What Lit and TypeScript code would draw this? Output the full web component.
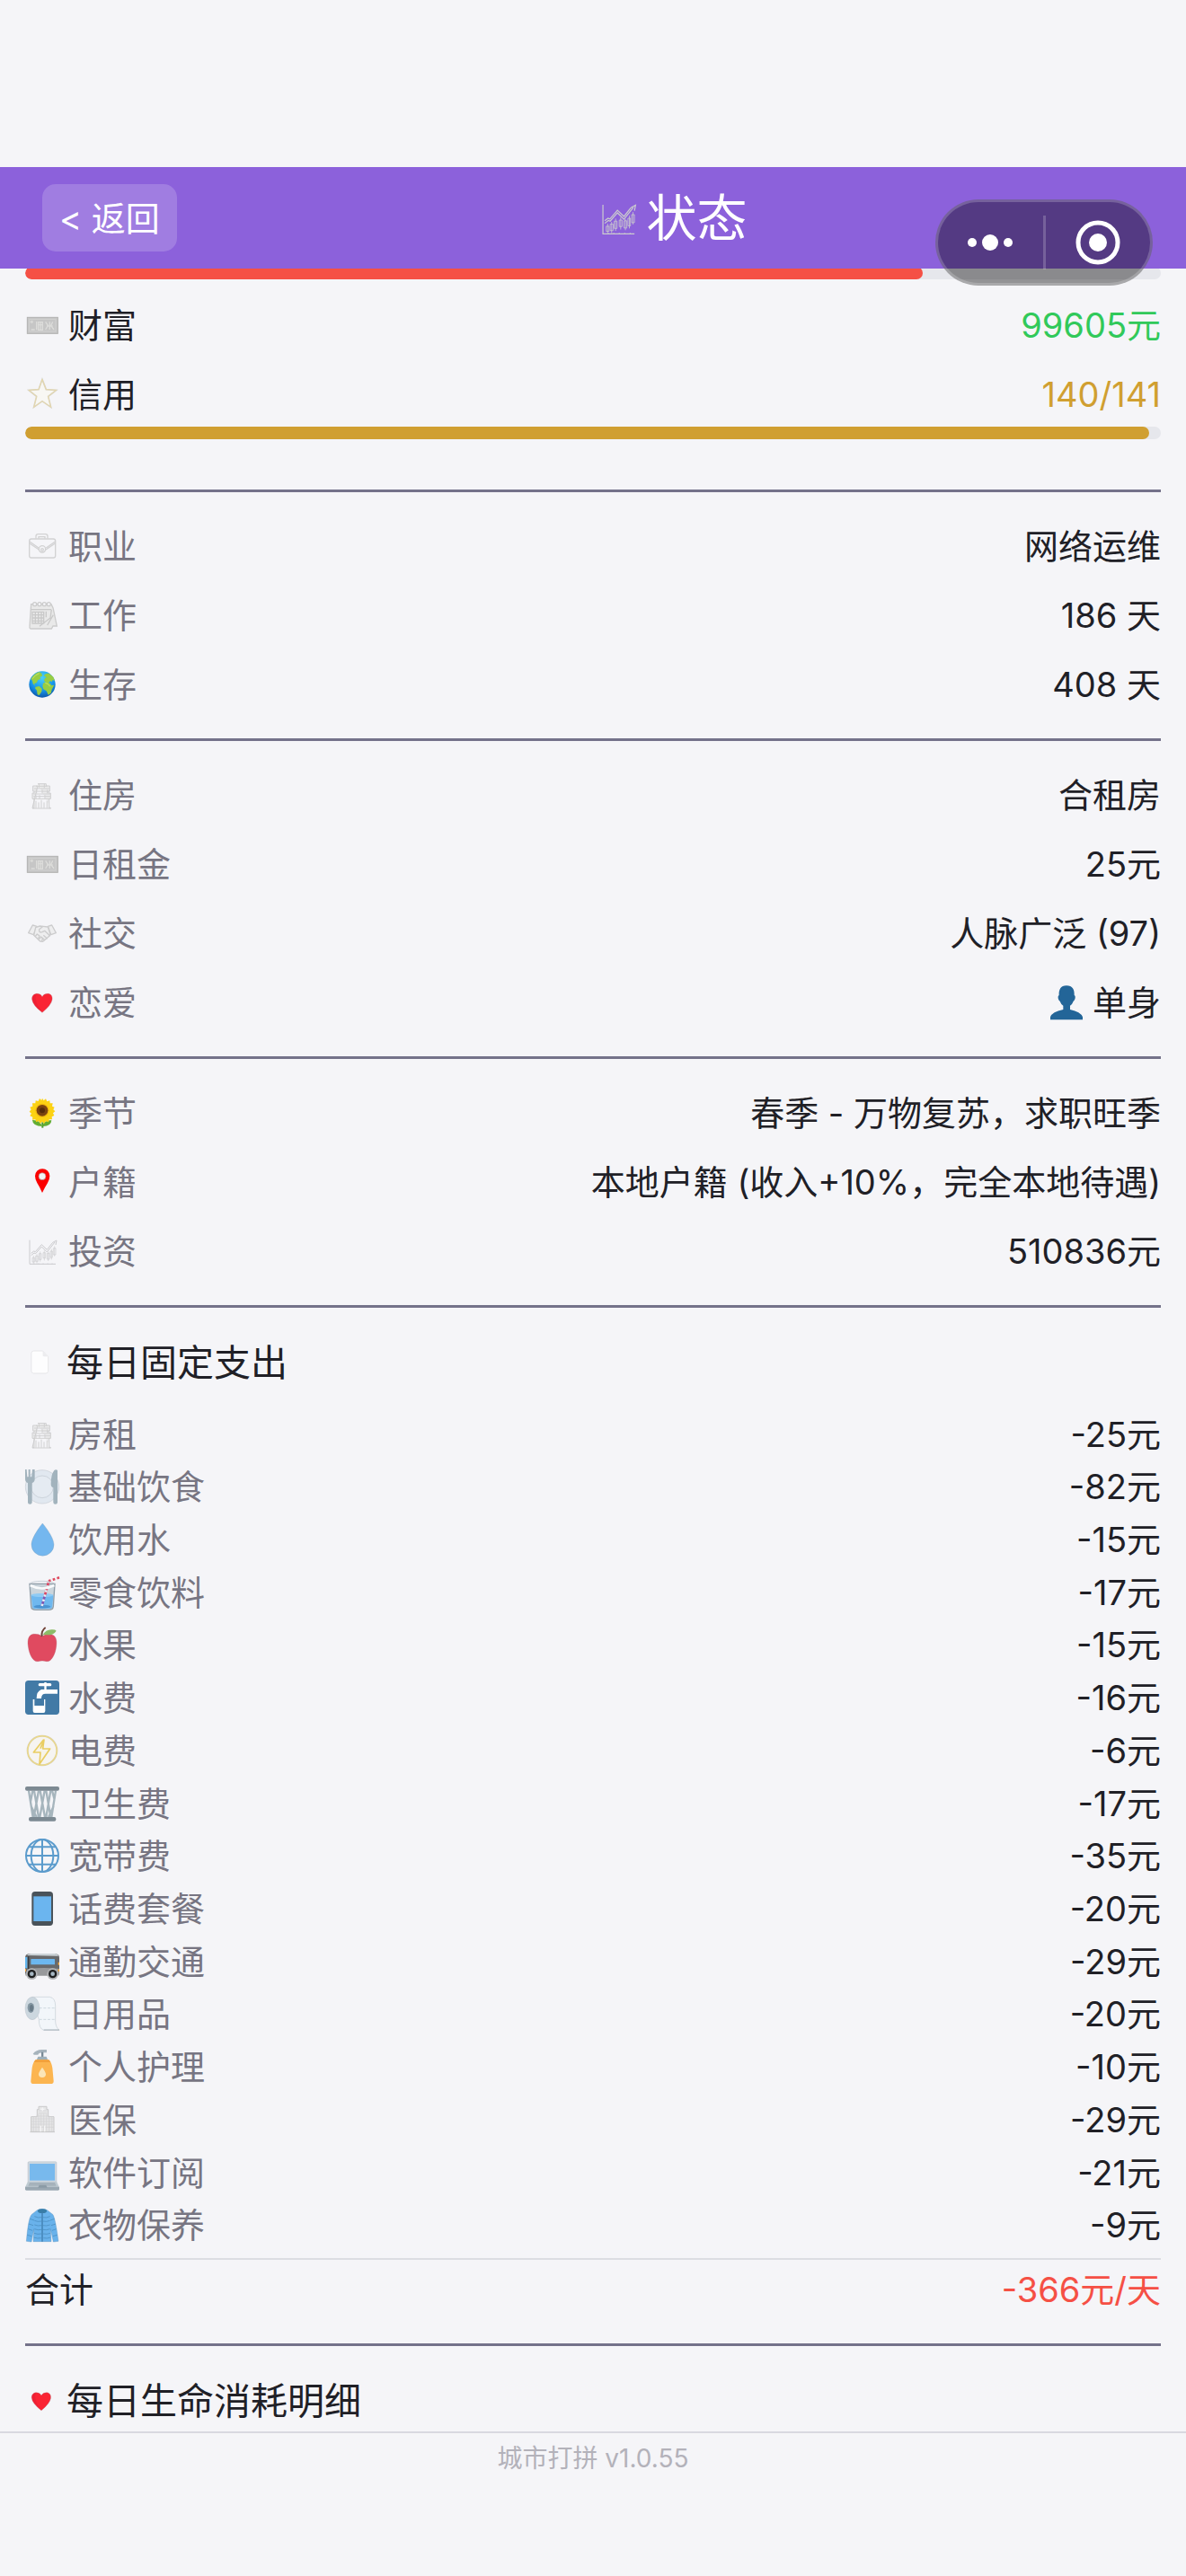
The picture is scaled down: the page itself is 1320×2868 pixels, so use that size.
import { LitElement, html, svg, css } from 'lit';
import { customElement, property } from 'lit/decorators.js';

// All icons are drawn on a 114 x 114 grid.
const icons: Record<string, unknown> = {
  money: svg`
    <rect x="7" y="31" width="102" height="54" fill="#c6c6c6" stroke="#b2b2b0" stroke-width="3" />
    <rect x="14" y="38" width="88" height="40" fill="none" stroke="#d6d6d4" stroke-width="2" />
    <circle cx="22" cy="46" r="5" fill="#d8d8d6" />
    <path d="M38 45v28M44 47h14v26H44zM51 47v26M44 56h14M68 46l8 12-8 14M82 46v26M72 60h20M92 46l-6 12 10 14M20 72h12" fill="none" stroke="#dcdcda" stroke-width="4" />`,
  star: svg`
    <path d="M57 7 70 41 104 43 77 64 86 100 57 80 29 100 38 64 12 43 45 41Z" fill="#f8f7f3" stroke="#d6d2c6" stroke-width="5" />
    <path d="M57 7 70 41 104 43 77 64 86 100 57 80 29 100 38 64 12 43 45 41Z" fill="none" stroke="#eedb9c" stroke-width="2" />`,
  briefcase: svg`
    <g fill="none" stroke="#d2d2d3" stroke-width="4">
      <rect x="14" y="33" width="87" height="63" rx="7" />
      <path d="M36 32v-8q0-7 7-7h25q7 0 7 7v8M45 32v-6h21v6M15 42l30 21M100 42 70 63M15 48l31 21M100 48 69 69" />
      <circle cx="57" cy="67" r="11" />
      <circle cx="57" cy="69" r="4" />
    </g>`,
  calendar: svg`
    <path d="M20 20h67l6 12 13 61H93l-5 9H20q-6 0-5-7z" fill="#e9e9e9" stroke="#cccccc" stroke-width="4" />
    <path d="M20 38h67M24 46h38v38H24zM24 56h38M24 66h38M24 76h38M34 46v38M44 46v38M54 46v38M88 38 84 66 48 94M94 56 74 90M70 44v20" fill="none" stroke="#c9c9c9" stroke-width="4" />
    <g fill="#f5f5f8" stroke="#cccccc" stroke-width="4">
      <circle cx="32" cy="20" r="6" /><circle cx="48" cy="20" r="6" /><circle cx="64" cy="20" r="6" /><circle cx="79" cy="20" r="6" />
    </g>`,
  earth: svg`
    <defs>
      <radialGradient id="sea" cx=".5" cy=".25" r=".8">
        <stop offset="0" stop-color="#4ad0fb" /><stop offset=".6" stop-color="#1593e8" /><stop offset="1" stop-color="#0b4b9f" />
      </radialGradient>
    </defs>
    <circle cx="57" cy="57" r="44" fill="url(#sea)" />
    <path d="M19 39Q29 21 47 15l8 5 2 9-8 3 3 7-9 3-5 10-8 3 5 7-9-7-2-10zM35 65l12-2 9 8-1 10-8 12-6-2-2-14-6-7zM62 27l8-6 10-1 14 12 5 12-8-1-2 6-5-4-6 7-9-2-6-5 2-8 6-3zM60 53l10-5 12 5 6 7 9-1-8 15-3 12-9 6-6-13-10-6-3-9z" fill="#98cd43" />
    <path d="M24 38q10-14 23-18M67 52l10 4 6 8" fill="none" stroke="#c7e36b" stroke-width="3" />`,
  building: svg`
    <path d="M42 20h28v7h12v18h-4v6h7v19h-5v31h6M24 101h6V70h-6V51h6v-6h-4V27h16zM24 102h62" fill="#ebebec" stroke="#cfcfd0" stroke-width="3" />
    <path d="M36 28h38M30 36h50M30 45h50M28 54h56M28 62h56M28 70h56M36 77v24M45 82v19M54 74v27M63 82v19M73 77v24M46 20v14M64 20v14M38 40v12M57 40v12M74 40v12M36 58v12M48 58v12M66 58v12" fill="none" stroke="#d0d0d1" stroke-width="3" />`,
  handshake: svg`
    <g fill="#eeeeef" stroke="#cccccd" stroke-width="4" stroke-linejoin="round">
      <path d="M11 56 25 30 39 34 28 62Z" />
      <path d="M103 56 89 30 76 34 86 62Z" />
      <path d="M35 38 49 33 60 34 76 36 84 61 77 70 59 85 50 84 29 64Z" />
      <path d="M60 34 47 44q-2 13 10 9l8-4 19 18M34 67l6-7 8 6-4 9M46 77l7-8 6 6-4 8M61 64l13 12M56 71l10 10" fill="none" />
    </g>`,
  heart: svg`
    <path d="M57 91Q25 66 23 47C22 34 31 28 40 28q11 0 17 10Q63 28 75 28c10 0 17 8 15 20Q87 66 57 91Z" fill="#fa2434" stroke="#a9606b" stroke-width="1" />
    <path d="M57 89Q27 66 25 47C24 38 29 31 37 30q-9 23 20 59Z" fill="#ee2035" />`,
  person: svg`
    <path d="M57 1C37 1 31 15 32 33c-5 2-4 15 3 20q3 9 11 15v13Q9 88 3 106v9h108v-9Q104 88 69 81V68q8-6 11-15c7-5 8-18 3-20C84 14 77 1 57 1Z" fill="#236598" />`,
  sunflower: svg`
    <path d="M55 88h6v19h-6z" fill="#4b9b2f" />
    <path d="M57 102Q25 101 24 81q25-1 33 21Q65 79 88 82 87 103 57 102Z" fill="#63ad32" />
    <path d="M57 8l5 8 7-6 4 9 9-3 1 9 9 0-2 10 8 3-4 8 6 6-7 6 4 8-8 4 1 9-10 0-2 9-9-3-6 8-6-7-7 7-5-9-8 4-3-9-10 1 1-9-9-4 5-8-7-6 6-7-4-8 9-3-1-10 10 0 1-9 9 2 4-9 7 6Z" fill="#fcd213" />
    <circle cx="57" cy="49" r="23" fill="#f3b90d" />
    <circle cx="57" cy="49" r="19" fill="#7a4310" />
    <circle cx="57" cy="49" r="9" fill="#542b0a" />`,
  pin: svg`
    <path d="M57 93Q50 76 40 60 33 48 33 37a24 24 0 0 1 49 0q0 11-7 23-10 16-18 33Z" fill="#fb0000" />
    <circle cx="57" cy="38" r="12" fill="#f1f4f5" stroke="#b77070" stroke-width="2" />`,
  chart: svg`
    <g fill="none" stroke="#cbcbce" stroke-width="3">
      <path d="M15 20v80h87M20 71l10-8 5 2 20-23 18 18 26-33M92 28l13-7-3 15M20 64l9-7 5 2 21-24 18 17 19-24" />
      <path d="M24 79h8v14h-8zM35 73h8v18h-8zM46 65h8v20h-8zM60 62h8v18h-8zM73 64h8v20h-8zM84 57h7v21h-7zM94 47h8v22h-8zM28 72v26M39 67v31M50 58v34M64 55v33M77 59v31M88 50v35M98 40v34M30 97v4M45 97v4M60 97v4M75 97v4M90 97v4" stroke-width="2" />
    </g>`,
  page: svg`
    <path d="M30 16h32l19 20v51q0 8-8 8H30q-8 0-8-8V24q0-8 8-8Z" fill="#fdfdfe" stroke="#dddde0" stroke-width="2" />
    <path d="M62 16v15q0 5 5 5h14Z" fill="#ececef" />`,
  dinner: svg`
    <circle cx="57" cy="58" r="56" fill="#e1e8f0" stroke="#c5ccd3" stroke-width="2" />
    <circle cx="57" cy="58" r="37" fill="#e5ebf2" stroke="#cdd4dc" stroke-width="3" />
    <path d="M0 0h5l2 25h4V0h6v25h5L24 0h8v32q0 10-9 13v65q0 6-7 6t-7-6V45Q0 42 0 32Z" fill="#a2b3bd" />
    <path d="M108 3v107q0 6-7 6t-7-6V61q-8-2-8-12 0-32 11-46 6-5 11 0Z" fill="#a2b3bd" />`,
  drop: svg`
    <path d="M58 3C58 3 21 48 21 74a37 37 0 0 0 75 0C96 48 58 3 58 3Z" fill="#74b7ef" stroke="#7d9ab2" stroke-width="1" />`,
  drink: svg`
    <path d="M15 28h84l-5 75q-1 12-16 12H36q-15 0-16-12Z" fill="#cbd5dc" stroke="#8f9da7" stroke-width="4" />
    <path d="M20 66q37-10 74 0l-3 38q-2 8-13 8H36q-11 0-12-8Z" fill="#6fb8ef" />
    <ellipse cx="57" cy="66" rx="37" ry="6" fill="#8fcbf5" />
    <ellipse cx="57" cy="104" rx="28" ry="6" fill="#4b94d2" />
    <path d="M56 102 66 66" fill="none" stroke="#8256b0" stroke-width="8" />
    <path d="M66 66 79 20" fill="none" stroke="#dc4661" stroke-width="8" />
    <path d="M56 102 79 20" fill="none" stroke="#e7edf5" stroke-width="8" stroke-dasharray="7 9" />
    <path d="M78 19 114 7" fill="none" stroke="#f3f3f5" stroke-width="8" />
    <path d="M78 19 114 7" fill="none" stroke="#e0485e" stroke-width="8" stroke-dasharray="8 7" />
    <ellipse cx="57" cy="28" rx="41" ry="9" fill="none" stroke="#b4c0c9" stroke-width="2" />
    <path d="M17 33q40 21 80 0" fill="none" stroke="#f8fafb" stroke-width="8" />`,
  apple: svg`
    <path d="M57 29Q43 20 28 22C12 24 7 40 10 62c4 31 18 54 33 51q14-4 28 0c16 3 30-23 33-51 3-23-3-37-18-39Q70 20 57 29Z" fill="#e04a60" stroke="#b35465" stroke-width="1" />
    <path d="M59 25Q68 6 91 7q10 0 13 4Q93 29 63 24Z" fill="#8dbc68" />
    <path d="M56 30Q53 11 68 0" fill="none" stroke="#704238" stroke-width="6" />`,
  tap: svg`
    <rect x="0" y="0" width="114" height="114" rx="11" fill="#427aa6" />
    <path d="M49 9h34q5 0 5 5t-5 5H49q-5 0-5-5t5-5ZM64 6h7v24h37v14H68q-14 0-14 16H38q0-24 16-30h10Z" fill="#fff" />
    <path d="M26 63v39q0 6 6 6h29q6 0 6-6V63h-4v21H31V63Z" fill="#fff" />`,
  bolt: svg`
    <circle cx="57" cy="57" r="49" fill="#f6f4f1" stroke="#d9d0ae" stroke-width="6" />
    <circle cx="57" cy="57" r="49" fill="none" stroke="#f2dc7c" stroke-width="3" />
    <path d="M62 20 28 63h23l-3 39 35-51H59l4-30-12 29" fill="#f7f3e7" stroke="#e9cd61" stroke-width="5" stroke-linejoin="round" />`,
  bin: svg`
    <path d="M12 14 26 102M30 14 45 102M50 14 66 102M70 14 85 102M102 14 88 102M85 14 70 102M65 14 49 102M45 14 29 102M25 14 18 50M90 14l8 30M20 66 38 102M95 66 78 102" fill="none" stroke="#a6b5bd" stroke-width="7" />
    <rect x="0" y="0" width="114" height="14" rx="6" fill="#7c8992" />
    <rect x="12" y="102" width="91" height="14" rx="6" fill="#7c8992" />`,
  net: svg`
    <g fill="none" stroke="#5b9bcc" stroke-width="6">
      <circle cx="57" cy="57" r="54" />
      <ellipse cx="57" cy="57" rx="37" ry="54" />
      <path d="M57 3v108M3 57h108M12 28h90M12 86h90" />
    </g>`,
  phone: svg`
    <rect x="22" y="0" width="71" height="114" rx="11" fill="#4a535a" />
    <rect x="28" y="16" width="59" height="83" fill="#6bb5ef" />`,
  bus: svg`
    <path d="M12 31h90q12 1 12 14v53H0V45q0-13 12-14Z" fill="#68696b" />
    <path d="M6 36q5-6 14-6h77q12 0 14 8Z" fill="#ccd3d7" />
    <path d="M8 82q50-7 106-1v17q0 6-6 6H2l-2-6Z" fill="#98999b" />
    <rect x="19" y="48" width="80" height="19" rx="2" fill="#6cb7ef" />
    <path d="M0 42h7v37H0Z" fill="#62b5ee" />
    <path d="M9 40h4v42H9Z" fill="#333a40" />
    <path d="M0 81h3v9H0zM110 59h4v9h-4zM110 82h4v8h-4z" fill="#f4a63b" />
    <circle cx="22" cy="98" r="19" fill="#b5b6b8" /><circle cx="92" cy="98" r="19" fill="#b5b6b8" />
    <circle cx="22" cy="98" r="14" fill="#1d1e1f" /><circle cx="92" cy="98" r="14" fill="#1d1e1f" />
    <circle cx="22" cy="98" r="7" fill="#a7b8c4" /><circle cx="92" cy="98" r="7" fill="#a7b8c4" />`,
  tissue: svg`
    <path d="M23 1h59q19 3 19 30v50q0 20 13 31H62Q46 107 46 77Z" fill="#f2f6fa" stroke="#c4cdd4" stroke-width="2" />
    <ellipse cx="24" cy="39" rx="24" ry="38" fill="#ccd7df" stroke="#aab4bd" stroke-width="1" />
    <ellipse cx="19" cy="37" rx="11" ry="17" fill="#8496a2" />
    <ellipse cx="21" cy="38" rx="6" ry="11" fill="#687a87" />
    <path d="M47 38h54M47 76h54" stroke="#ced8df" stroke-width="3" stroke-dasharray="9 5" />
    <path d="M62 111h52" stroke="#a6b0b8" stroke-width="3" />`,
  lotion: svg`
    <path d="M26 14Q37 0 55 0h17v10h-9Q46 9 43 17H30Z" fill="#a6b3bc" />
    <path d="M54 8h7v20h-7Z" fill="#788995" />
    <path d="M43 23h28l5 12H38Z" fill="#9eafb9" />
    <path d="M35 34h44q9 8 12 27l4 43q1 10-10 10H28q-10 0-9-10l4-43q3-19 12-27Z" fill="#fcb550" />
    <path d="M35 34h44l6 8H29Z" fill="#f2a03b" />
    <path d="M57 59q12 16 12 23a12 11 0 0 1-24 0q0-7 12-23Z" fill="#fbe6b8" />`,
  hospital: svg`
    <path d="M16 98h83M20 97V47h20V23h5V13h27v10h5v24h19v50Z" fill="#e6e6e7" stroke="#c9c9ca" stroke-width="3" />
    <path d="M45 27h27M45 35h27M36 45h45M22 54h73M22 63h73M22 72h73M22 82h73M28 48v48M36 48v48M45 37v58M53 37v58M62 37v58M71 37v58M80 48v48M89 48v48" fill="none" stroke="#d2d2d3" stroke-width="2" />
    <path d="M58 16v12M52 22h12M52 77v20M65 77v20" stroke="#f5f5f6" stroke-width="4" />`,
  laptop: svg`
    <path d="M13 20h88q4 0 4 4v65H9V24q0-4 4-4Z" fill="#ced7df" stroke="#a4adb5" stroke-width="1" />
    <path d="M15 27h84v56H15Z" fill="#78b9ed" />
    <path d="M9 86h96l9 20H0Z" fill="#becad1" />
    <path d="M15 90h84l5 11H10Z" fill="#a5b2bb" />
    <path d="M0 104h114v8q0 4-4 4H4q-4 0-4-4Z" fill="#9aa8b2" />
    <path d="M47 98h23l4 9H43Z" fill="#8b9ba6" />`,
  coat: svg`
    <path d="M40 8q17-8 34 0l19 15q8 14 18 89l-17 2-9-43 2 42H27l2-42-8 43-17-2Q10 36 21 23Z" fill="#69b2eb" stroke="#528ab5" stroke-width="1" />
    <ellipse cx="57" cy="11" rx="15" ry="7" fill="#397da7" />
    <path d="M57 16v97" stroke="#3f7eaf" stroke-width="4" />
    <path d="M31 29q12 6 24 3M31 43q12 5 24 2M31 57q12 5 24 2M31 71q12 5 24 2M30 85q12 5 24 2M29 99q12 5 24 2M83 29q-12 6-24 3M83 43q-12 5-24 2M83 57q-12 5-24 2M83 71q-12 5-24 2M84 85q-12 5-24 2M85 99q-12 5-24 2M16 37l14 5M12 54l15 5M10 71l14 5M7 91l14 4M98 37l-14 5M102 54l-15 5M104 71l-14 5M107 91l-14 4" fill="none" stroke="#4688ba" stroke-width="2" />`,
};

const infoSections = [
  [
    { icon: 'briefcase', label: '职业', value: '网络运维' },
    { icon: 'calendar', label: '工作', value: '186 天' },
    { icon: 'earth', label: '生存', value: '408 天' },
  ],
  [
    { icon: 'building', label: '住房', value: '合租房' },
    { icon: 'money', label: '日租金', value: '25元' },
    { icon: 'handshake', label: '社交', value: '人脉广泛 (97)' },
    { icon: 'heart', label: '恋爱', value: '单身', valueIcon: 'person' },
  ],
  [
    { icon: 'sunflower', label: '季节', value: '春季 - 万物复苏，求职旺季' },
    { icon: 'pin', label: '户籍', value: '本地户籍 (收入+10%，完全本地待遇)' },
    { icon: 'chart', label: '投资', value: '510836元' },
  ],
];

const expenses = [
  { icon: 'building', label: '房租', cost: 25 },
  { icon: 'dinner', label: '基础饮食', cost: 82 },
  { icon: 'drop', label: '饮用水', cost: 15 },
  { icon: 'drink', label: '零食饮料', cost: 17 },
  { icon: 'apple', label: '水果', cost: 15 },
  { icon: 'tap', label: '水费', cost: 16 },
  { icon: 'bolt', label: '电费', cost: 6 },
  { icon: 'bin', label: '卫生费', cost: 17 },
  { icon: 'net', label: '宽带费', cost: 35 },
  { icon: 'phone', label: '话费套餐', cost: 20 },
  { icon: 'bus', label: '通勤交通', cost: 29 },
  { icon: 'tissue', label: '日用品', cost: 20 },
  { icon: 'lotion', label: '个人护理', cost: 10 },
  { icon: 'hospital', label: '医保', cost: 29 },
  { icon: 'laptop', label: '软件订阅', cost: 21 },
  { icon: 'coat', label: '衣物保养', cost: 9 },
];

@customElement('game-icon')
export class GameIcon extends LitElement {
  @property() name = '';

  static styles = css`
    :host {
      display: block;
      flex: none;
      width: 38px;
      height: 38px;
    }
    svg {
      display: block;
      width: 100%;
      height: 100%;
      overflow: visible;
    }
  `;

  render() {
    return html`<svg viewBox="0 0 114 114" aria-hidden="true">${icons[this.name]}</svg>`;
  }
}

@customElement('stat-row')
export class StatRow extends LitElement {
  @property() icon = '';
  @property() label = '';
  @property() value = '';
  @property({ attribute: 'value-icon' }) valueIcon = '';

  static styles = css`
    :host {
      display: flex;
      align-items: center;
      justify-content: space-between;
      height: 57px;
      color: #202026;
    }
    .label,
    .value {
      display: flex;
      align-items: center;
      gap: 10px;
      white-space: nowrap;
    }
    .label {
      color: var(--label-color, #777582);
    }
    .value {
      color: var(--value-color, inherit);
    }
  `;

  render() {
    return html`
      <span class="label">
        ${this.icon ? html`<game-icon name=${this.icon}></game-icon>` : null}
        ${this.label}
      </span>
      <span class="value">
        ${this.valueIcon ? html`<game-icon name=${this.valueIcon}></game-icon>` : null}
        ${this.value}
      </span>
    `;
  }
}

@customElement('app-root')
export class AppRoot extends LitElement {
  static styles = css`
    :host {
      display: flex;
      flex-direction: column;
      box-sizing: border-box;
      height: 100vh;
      padding-top: 186px;
      background: #f5f5f8;
      color: #202026;
      font-family: Inter, 'Noto Sans CJK SC', sans-serif;
      font-size: 38px;
      line-height: 56px;
    }
    .header {
      position: relative;
      display: flex;
      align-items: center;
      flex: none;
      height: 113px;
      padding: 0 20px 0 47px;
      background: #8c61db;
      color: #fff;
      z-index: 1;
    }
    .back {
      height: 75px;
      padding: 0 19px;
      border: 0;
      border-radius: 15px;
      background: rgba(255, 255, 255, 0.18);
      color: inherit;
      font: inherit;
      white-space: nowrap;
    }
    .title {
      display: flex;
      flex: 1;
      align-items: center;
      justify-content: center;
      gap: 8px;
      margin: 0;
      font-size: 56px;
      font-weight: 400;
    }
    .title game-icon {
      width: 46px;
      height: 46px;
    }
    .capsule {
      position: absolute;
      top: 36px;
      right: 37px;
      display: flex;
      align-items: center;
      box-sizing: border-box;
      width: 242px;
      height: 96px;
      border: 3px solid rgba(255, 255, 255, 0.2);
      border-radius: 48px;
      background: rgba(0, 0, 0, 0.4);
    }
    .capsule button {
      display: flex;
      flex: 1;
      align-items: center;
      justify-content: center;
      height: 100%;
      padding: 0;
      border: 0;
      background: none;
    }
    .split {
      width: 3px;
      height: 60px;
      background: rgba(255, 255, 255, 0.2);
    }
    .content {
      flex: 1;
      min-height: 0;
      padding: 0 28px;
      overflow: hidden;
    }
    .bar {
      height: 14px;
      border-radius: 7px;
      background: #e6e7ec;
      overflow: hidden;
    }
    .fill {
      height: 100%;
      border-radius: 7px;
    }
    .health {
      margin-top: -2px;
    }
    .health .fill {
      background: #f55045;
    }
    .credit .fill {
      background: #d09f31;
    }
    .assets {
      display: flex;
      flex-direction: column;
      gap: 20px;
      padding: 22px 0 8px;
      --label-color: #202026;
    }
    .wealth {
      --value-color: #31c95a;
    }
    .rating {
      --value-color: #d09f31;
    }
    .credit {
      margin-bottom: 56px;
    }
    .section {
      border-top: 3px solid #74728a;
    }
    .info {
      display: flex;
      flex-direction: column;
      gap: 20px;
      padding: 31px 0 32px;
    }
    .heading {
      display: flex;
      align-items: center;
      gap: 10px;
      height: 80px;
      margin: 0;
      padding: 21px 0 11px;
      font-size: 41px;
      font-weight: 400;
    }
    .heading game-icon {
      width: 36px;
      height: 36px;
    }
    .expenses {
      display: flex;
      flex-direction: column;
      justify-content: space-between;
      min-height: 938px;
    }
    .total {
      margin-top: 8px;
      padding: 4px 0 32px;
      border-top: 2px solid #dcdde2;
      --label-color: #202026;
      --value-color: #f55045;
    }
    .footer {
      flex: none;
      height: 159px;
      border-top: 2px solid #d9d9e0;
      color: #b3b2ba;
      font-size: 28px;
      text-align: center;
    }
  `;

  render() {
    const total = expenses.reduce((sum, item) => sum + item.cost, 0);
    return html`
      <header class="header">
        <button class="back" type="button">&lt; 返回</button>
        <h1 class="title"><game-icon name="chart"></game-icon>状态</h1>
        ${this._renderCapsule()}
      </header>
      <main class="content">
        <div class="bar health"><div class="fill" style="width: 79%"></div></div>
        <div class="assets">
          <stat-row class="wealth" icon="money" label="财富" value="99605元"></stat-row>
          <stat-row class="rating" icon="star" label="信用" value="140/141"></stat-row>
        </div>
        <div class="bar credit"><div class="fill" style="width: 99%"></div></div>
        ${infoSections.map(rows => html`
          <section class="section info">
            ${rows.map(row => html`
              <stat-row
                icon=${row.icon}
                label=${row.label}
                value=${row.value}
                value-icon=${row.valueIcon ?? ''}
              ></stat-row>
            `)}
          </section>
        `)}
        <section class="section">
          <h2 class="heading"><game-icon name="page"></game-icon>每日固定支出</h2>
          <div class="expenses">
            ${expenses.map(item => html`
              <stat-row icon=${item.icon} label=${item.label} value=${`-${item.cost}元`}></stat-row>
            `)}
          </div>
          <div class="total">
            <stat-row label="合计" value=${`-${total}元/天`}></stat-row>
          </div>
        </section>
        <section class="section">
          <h2 class="heading"><game-icon name="heart"></game-icon>每日生命消耗明细</h2>
        </section>
      </main>
      <footer class="footer">城市打拼 v1.0.55</footer>
    `;
  }

  _renderCapsule() {
    return html`
      <div class="capsule">
        <button type="button" aria-label="更多">
          <svg width="52" height="20" viewBox="0 0 52 20" fill="#fff">
            <circle cx="6" cy="10" r="5" />
            <circle cx="26" cy="10" r="9" />
            <circle cx="46" cy="10" r="5" />
          </svg>
        </button>
        <span class="split"></span>
        <button type="button" aria-label="关闭">
          <svg width="50" height="50" viewBox="0 0 50 50">
            <circle cx="25" cy="25" r="22" fill="none" stroke="#fff" stroke-width="5" />
            <circle cx="25" cy="25" r="10" fill="#fff" />
          </svg>
        </button>
      </div>
    `;
  }
}
